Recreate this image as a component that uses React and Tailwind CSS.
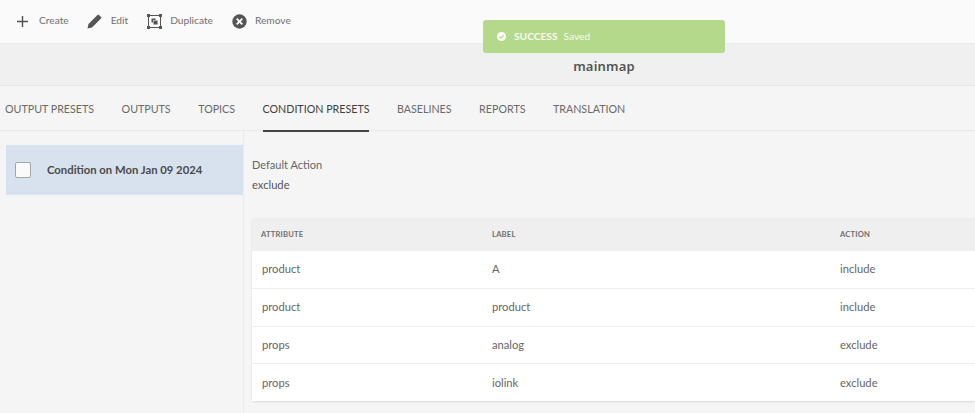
import React from "react";

const tabs = ["OUTPUT PRESETS", "OUTPUTS", "TOPICS", "CONDITION PRESETS", "BASELINES", "REPORTS", "TRANSLATION"];

const rows = [
  ["product", "A", "include"],
  ["product", "product", "include"],
  ["props", "analog", "exclude"],
  ["props", "iolink", "exclude"],
];

function DuplicateIcon() {
  return (
    <svg width="15" height="15" viewBox="0 0 15 15" className="text-[#555]">
      <rect x="1.5" y="1.5" width="12" height="12" fill="none" stroke="currentColor" strokeWidth="1" />
      <rect x="0" y="0" width="3" height="3" fill="currentColor" />
      <rect x="12" y="0" width="3" height="3" fill="currentColor" />
      <rect x="0" y="12" width="3" height="3" fill="currentColor" />
      <rect x="12" y="12" width="3" height="3" fill="currentColor" />
      <path d="M4.5 4.5h4v1.5h-2.500v2.500h-1.500z" fill="currentColor" />
      <rect x="6.500" y="6.500" width="4" height="4" fill="currentColor" />
    </svg>
  );
}

function Toolbar() {
  return (
    <div className="h-[43px] bg-[#fafafa] flex items-center pl-[17px] pb-[1px] text-[10.200px] text-[#707070]">
      <svg width="11" height="11" viewBox="0 0 11 11" className="text-[#505050]">
        <path d="M5.500 0v11M0 5.500h11" stroke="currentColor" strokeWidth="1.400" />
      </svg>
      <span className="ml-[11px]">Create</span>
      <svg width="15" height="15" viewBox="0 0 15 15" className="ml-[18px] text-[#555]">
        <path d="M0.500 14.500l1-4.500 8.500-8.500 1.500-1 3 3-1 1.500-8.500 8.500z" fill="currentColor" />
      </svg>
      <span className="ml-[9px]">Edit</span>
      <div className="ml-[19px]">
        <DuplicateIcon />
      </div>
      <span className="ml-[8px]">Duplicate</span>
      <svg width="15" height="15" viewBox="0 0 15 15" className="ml-[19px] text-[#555]">
        <circle cx="7.500" cy="7.500" r="7.200" fill="currentColor" />
        <path d="M4.700 4.700l5.600 5.600M10.300 4.700l-5.600 5.600" stroke="#fafafa" strokeWidth="1.900" />
      </svg>
      <span className="ml-[8px]">Remove</span>
    </div>
  );
}

export default function App() {
  return (
    <div className="relative w-[975px] h-[413px] overflow-hidden bg-[#f5f5f5] font-['Lato',sans-serif]">
      <Toolbar />

      <div className="h-[42px] bg-[#f0f0f0] border-t border-[#ececec] flex items-end justify-center pb-[10px] pl-[233px]">
        <span className="font-['Noto_Sans',sans-serif] font-semibold text-[13px] leading-[18px] text-[#555] tracking-[0.2px]">mainmap</span>
      </div>

      <div className="h-[46px] bg-[#f5f5f5] border-t border-[#e8e8e8] border-b flex pl-[5px] gap-[27.500px] text-[10.700px] text-[#6a6a6a]">
        {tabs.map((tab) => (
          <div
            key={tab}
            className={`h-[46px] flex items-center pt-[3px] border-b-2 ${tab === "CONDITION PRESETS" ? "border-[#444] text-[#3f3f3f]" : "border-transparent"}`}
          >
            {tab}
          </div>
        ))}
      </div>

      <div className="flex h-[282px]">
        <div className="w-[244px] border-r border-[#ebebeb] pl-[6px] pt-[14px] shrink-0">
          <div className="h-[50px] bg-[#d8e1ee] flex items-center pl-[9px]">
            <div className="w-[16px] h-[16px] bg-[#fafafa] border border-[#a5a5a5] rounded-[2px]" />
            <span className="ml-[16px] text-[11.300px] font-bold text-[#4b4b4b]">Condition on Mon Jan 09 2024</span>
          </div>
        </div>

        <div className="flex-1 pl-[8px] pt-[26px] text-[11.200px] text-[#666]">
          <div className="leading-[16px] text-[11px]">Default Action</div>
          <div className="mt-[4px] leading-[16px] text-[#555]">exclude</div>

          <div className="mt-[25px] rounded-[3px] shadow-[0_1px_2px_rgba(0,0,0,0.12)]">
            <div className="h-[32px] bg-[#efefef] grid grid-cols-[231px_348px_1fr] items-center pl-[9px] pt-[2px] text-[7.600px] font-bold tracking-[0.2px] text-[#707070]">
              <span>ATTRIBUTE</span>
              <span>LABEL</span>
              <span>ACTION</span>
            </div>
            {rows.map((row, index) => (
              <div
                key={index}
                className="h-[37.750px] bg-white border-t border-[#efefef] first:border-t-0 grid grid-cols-[230px_348px_1fr] items-center pl-[10px] pt-[1px] text-[#666]"
              >
                {row.map((cell, i) => (
                  <span key={i}>{cell}</span>
                ))}
              </div>
            ))}
          </div>
        </div>
      </div>

      <div className="absolute left-[483px] top-[20px] w-[242px] h-[33px] rounded-[3px] bg-[#b4d98a] flex items-center pl-[14px] text-[10.200px] text-[#f7fbf0]">
        <svg width="9" height="9" viewBox="0 0 9 9">
          <circle cx="4.500" cy="4.500" r="4.500" fill="#fbfdf6" />
          <path d="M2.300 4.600l1.600 1.500 2.800-3" fill="none" stroke="#b4d98a" strokeWidth="1.200" />
        </svg>
        <span className="ml-[8px] font-bold">SUCCESS</span>
        <span className="ml-[6px]">Saved</span>
      </div>
    </div>
  );
}
